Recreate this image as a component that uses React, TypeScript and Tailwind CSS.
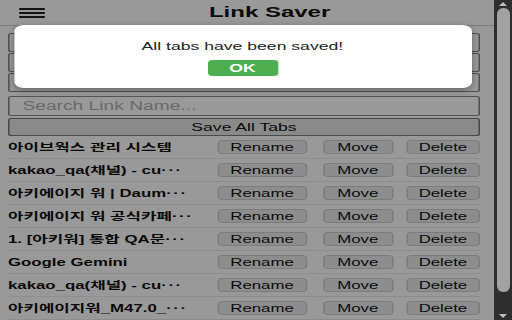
import React from 'react';

interface LinkItem {
  name: string;
  cut?: boolean;
}

// Liste des liens sauvegardés (texte déjà coupé comme dans la popup)
const links: LinkItem[] = [
  { name: '아이브웍스 관리 시스템' },
  { name: 'kakao_qa(채널) - cu', cut: true },
  { name: '아키에이지 워 | Daum', cut: true },
  { name: '아키에이지 워 공식카페', cut: true },
  { name: '1. [아키워] 통합 QA문', cut: true },
  { name: 'Google Gemini' },
  { name: 'kakao_qa(채널) - cu', cut: true },
  { name: '아키에이지워_M47.0_', cut: true },
];

function RowButton({ label, className = '' }: { label: string; className?: string }) {
  return (
    <button
      type="button"
      className={`h-[14px] shrink-0 rounded-[3px] border border-[#cfcfcf] bg-[#ececec] px-[7px] text-[10.5px] leading-none text-[#111] ${className}`}
    >
      {label}
    </button>
  );
}

export default function App() {
  return (
    <div className="flex h-[320px] w-[512px] overflow-hidden bg-white font-['Liberation_Sans','Noto_Sans_CJK_KR',sans-serif]">
      <div className="h-full w-[494px] overflow-hidden">
        {/* contenu étiré horizontalement comme la capture */}
        <div className="relative h-[320px] w-[309px] origin-top-left scale-x-[1.6]">
          <div className="flex h-[26px] items-center border-b border-[#cfcfcf]">
            <div className="ml-[12px] flex w-[16px] flex-col gap-[2px] pt-[1px]">
              <span className="h-[2px] bg-[#222]" />
              <span className="h-[2px] bg-[#222]" />
              <span className="h-[2px] bg-[#222]" />
            </div>
            <h1 className="flex-1 text-center text-[15px] font-bold text-[#111]">Link Saver</h1>
          </div>

          <div className="pl-[5px] pr-[9px] pt-[7px]">
            <div className="flex flex-col gap-[1px]">
              <div className="h-[19px] rounded-[2px] border border-[#8a8a8a] bg-white" />
              <div className="h-[19px] rounded-[2px] border border-[#8a8a8a] bg-white" />
              <div className="h-[19px] rounded-[2px] border border-[#8a8a8a] bg-white" />
            </div>

            <input
              type="text"
              placeholder="Search Link Name..."
              className="mt-[4px] block h-[20px] w-full rounded-[2px] border border-[#8a8a8a] bg-white px-[8px] text-[12px] text-[#111] placeholder:text-[#b0b0b0] outline-none"
            />

            <button
              type="button"
              className="mt-[2px] block h-[18px] w-full rounded-[2px] border border-[#7a7a7a] bg-[#e6e6e6] text-[11px] leading-none text-[#111]"
            >
              Save All Tabs
            </button>

            <ul>
              {links.map((link, index) => (
                <li key={index} className="flex h-[23px] items-center border-b border-[#ececec]">
                  <div className="min-w-0 flex-1 overflow-hidden whitespace-nowrap text-[10.5px] font-bold leading-[14px] text-[#111]">
                    {link.name}
                    {link.cut && <span className="tracking-[1px]">···</span>}
                  </div>
                  <RowButton label="Rename" className="ml-[4px]" />
                  <RowButton label="Move" className="ml-[10px] w-[44px]" />
                  <RowButton label="Delete" className="ml-[8px]" />
                </li>
              ))}
            </ul>
          </div>

          {/* fond du modal */}
          <div className="absolute inset-0 flex items-start justify-center bg-black/40 pr-[6px] pt-[25px]">
            <div className="flex w-[286px] flex-col items-center rounded-[6px] bg-white pb-[12px] pt-[15px] shadow-[0_2px_6px_rgba(0,0,0,0.35)]">
              <p className="text-[11px] leading-[13px] text-[#222]">All tabs have been saved!</p>
              <button
                type="button"
                className="mt-[7px] h-[16px] w-[44px] rounded-[3px] bg-[#4caf50] text-[11px] font-bold leading-none text-white"
              >
                OK
              </button>
            </div>
          </div>
        </div>
      </div>

      {/* barre de défilement */}
      <div className="flex h-full w-[18px] flex-col items-center bg-[#2e2e2e]">
        <div className="mt-[2px] h-0 w-0 border-x-[4px] border-b-[4px] border-x-transparent border-b-[#bdbdbd]" />
        <div className="mt-[2px] w-[13px] flex-1 rounded-[6px] bg-[#a2a2a2]" />
        <div className="mb-[2px] mt-[22px] h-0 w-0 border-x-[4px] border-t-[4px] border-x-transparent border-t-[#bdbdbd]" />
      </div>
    </div>
  );
}
